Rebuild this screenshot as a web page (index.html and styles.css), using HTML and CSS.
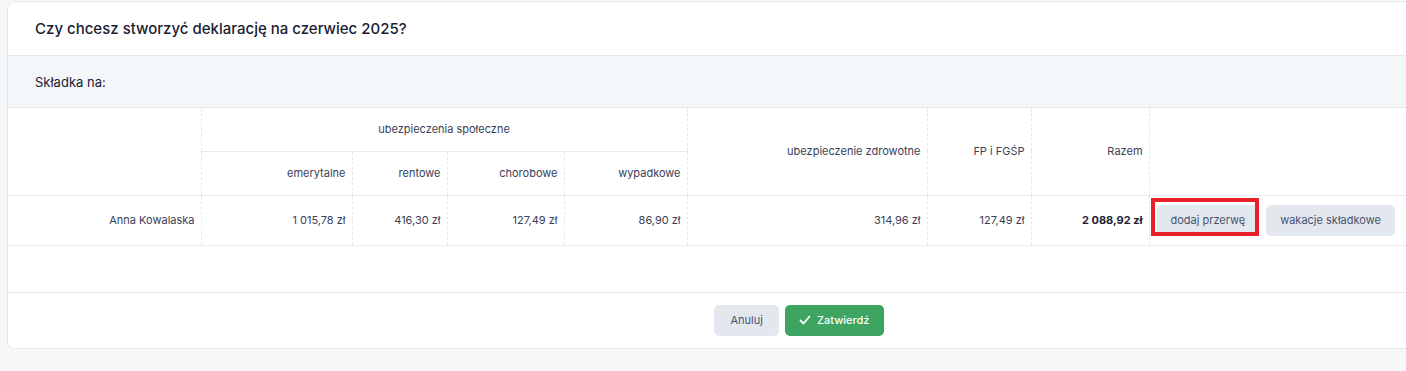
FILE: index.html
```html
<!DOCTYPE html>
<html lang="pl">

<head>
    <meta charset="UTF-8">
    <meta name="viewport" content="width=device-width, initial-scale=1.0">
    <title>Deklaracja</title>
    <link rel="stylesheet" href="styles.css">
</head>

<body>
    <div class="declaration-card">
        <div class="card-header">
            <h2>Czy chcesz stworzyć deklarację na czerwiec 2025?</h2>
        </div>
        <div class="card-section">Składka na:</div>

        <div class="table-wrap">
            <table class="contrib-table">
                <colgroup>
                    <col class="c-name">
                    <col class="c-em">
                    <col class="c-rent">
                    <col class="c-chor">
                    <col class="c-wyp">
                    <col class="c-zdr">
                    <col class="c-fp">
                    <col class="c-sum">
                    <col class="c-act">
                </colgroup>
                <thead>
                    <tr class="head-top">
                        <th rowspan="2"></th>
                        <th colspan="4" class="center">ubezpieczenia społeczne</th>
                        <th rowspan="2">ubezpieczenie zdrowotne</th>
                        <th rowspan="2">FP i FGŚP</th>
                        <th rowspan="2">Razem</th>
                        <th rowspan="2" class="no-line"></th>
                    </tr>
                    <tr class="head-sub">
                        <th>emerytalne</th>
                        <th>rentowe</th>
                        <th>chorobowe</th>
                        <th>wypadkowe</th>
                    </tr>
                </thead>
                <tbody>
                    <tr class="body-row">
                        <td>Anna Kowalaska</td>
                        <td>1 015,78 zł</td>
                        <td>416,30 zł</td>
                        <td>127,49 zł</td>
                        <td>86,90 zł</td>
                        <td>314,96 zł</td>
                        <td>127,49 zł</td>
                        <td class="total">2 088,92 zł</td>
                        <td class="actions no-line">
                            <div class="action-buttons">
                                <span class="marked">
                                    <button class="btn btn-light">dodaj przerwę</button>
                                    <span class="mark-box"></span>
                                </span>
                                <button class="btn btn-light">wakacje składkowe</button>
                            </div>
                        </td>
                    </tr>
                </tbody>
            </table>
        </div>

        <div class="card-footer">
            <button class="btn btn-light">Anuluj</button>
            <button class="btn btn-success">
                <svg width="12" height="12" viewBox="0 0 12 12" fill="none" stroke="#fff" stroke-width="1.8"
                    stroke-linecap="round" stroke-linejoin="round">
                    <polyline points="1.5,6.5 4.5,9.5 10.5,2.5"></polyline>
                </svg>
                Zatwierdź
            </button>
        </div>
    </div>
</body>

</html>
```

FILE: styles.css
```css
html,
body {
    overflow: hidden;
}

body {
    margin: 0;
    padding: 1px 0 0 7px;
    background: #f6f7f9;
    font-family: Inter, "Noto Sans", sans-serif;
    color: #252f4a;
}

.declaration-card {
    width: 1582px;
    background: #fff;
    border: 1px solid #e6e8ee;
    border-radius: 7px;
    overflow: hidden;
}

.card-header {
    height: 53px;
    display: flex;
    align-items: center;
    padding: 0 27px;
    border-bottom: 1px solid #e6e8ee;
}

.card-header h2 {
    margin: 0;
    font-size: 15px;
    font-weight: 500;
    color: #1b2133;
}

.card-section {
    height: 51px;
    display: flex;
    align-items: center;
    padding: 0 27px;
    background: #f4f7fa;
    border-bottom: 1px solid #e6e8ee;
    font-size: 13px;
    font-weight: 400;
    color: #1b2133;
}

.table-wrap {
    padding-bottom: 46px;
    border-bottom: 1px solid #e6e8ee;
}

.contrib-table {
    border-collapse: collapse;
    table-layout: fixed;
    width: 1580px;
    font-size: 11px;
    color: #3a4158;
}

.c-name { width: 193px; }
.c-em { width: 151px; }
.c-rent { width: 95px; }
.c-chor { width: 117px; }
.c-wyp { width: 123px; }
.c-zdr { width: 240px; }
.c-fp { width: 104px; }
.c-sum { width: 118px; }
.c-act { width: 439px; }

.contrib-table th,
.contrib-table td {
    padding: 0 6px;
    text-align: right;
    font-weight: 400;
    line-height: 16px;
    border-right: 1px dashed #e6e8ee;
    border-bottom: 1px solid #e9ebf0;
    white-space: nowrap;
}

.contrib-table th.center {
    text-align: center;
}

.contrib-table .no-line {
    border-right: none;
}

.head-top {
    height: 43px;
}

.head-sub {
    height: 44px;
}

.body-row {
    height: 50px;
}

.contrib-table td.total {
    font-weight: 700;
    color: #1b2133;
}

.contrib-table td.actions {
    text-align: left;
    padding-left: 7px;
}

.action-buttons {
    display: flex;
    gap: 7px;
    align-items: center;
}

.action-buttons .btn {
    padding: 0 14px;
}

.marked {
    position: relative;
    display: inline-flex;
}

.mark-box {
    position: absolute;
    left: -6px;
    top: -7px;
    width: 108px;
    height: 38px;
    box-sizing: border-box;
    border: 4px solid #e8202a;
    pointer-events: none;
}

.btn {
    height: 31px;
    padding: 0 16px;
    border: none;
    border-radius: 5px;
    font-family: Inter, "Noto Sans", sans-serif;
    font-size: 11px;
    font-weight: 400;
    cursor: pointer;
    display: inline-flex;
    align-items: center;
    gap: 6px;
}

.btn-light {
    background: #e3e8ef;
    color: #475270;
}

.btn-success {
    background: #3da461;
    color: #fff;
    font-weight: 500;
    padding: 0 14px;
}

.card-footer {
    display: flex;
    justify-content: center;
    gap: 6px;
    padding: 12px 0 12px;
}
```
